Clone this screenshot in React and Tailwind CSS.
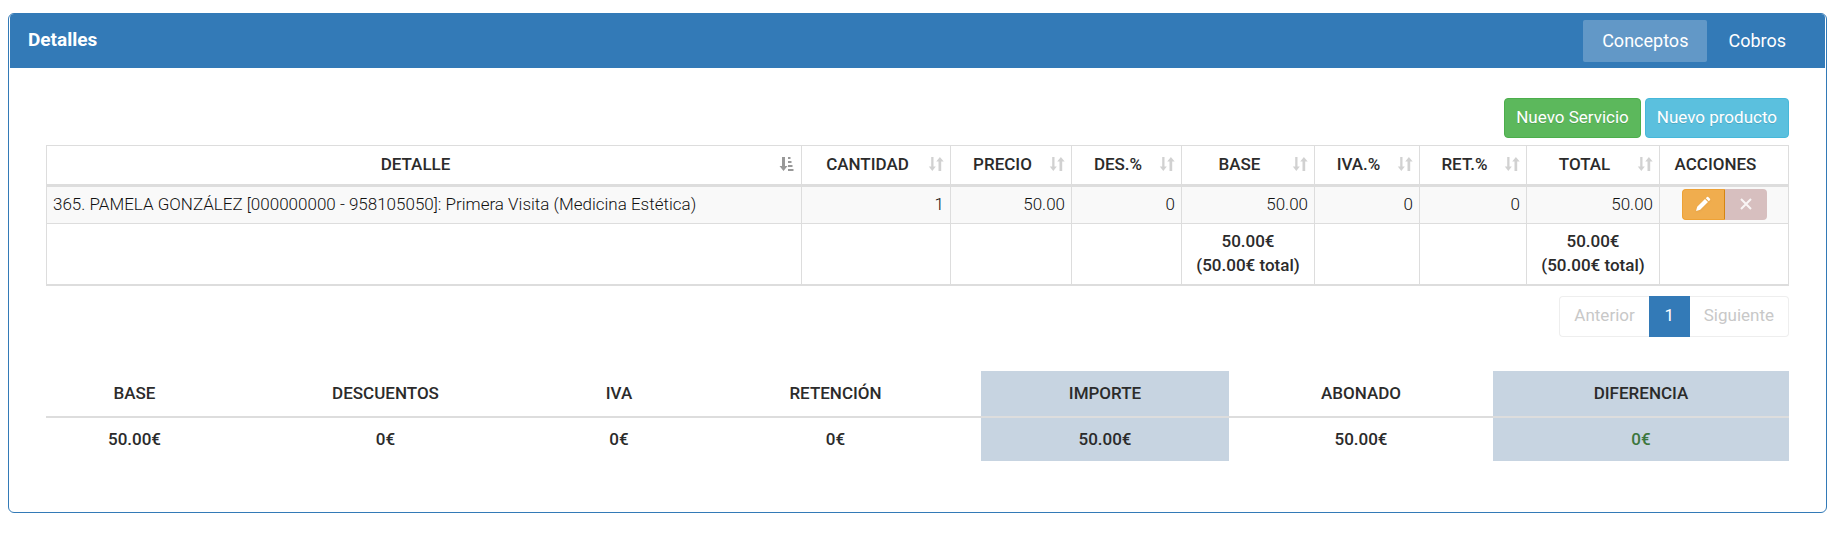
import { clsx } from 'clsx';

const columns = [
  { label: 'DETALLE', sort: 'asc' },
  { label: 'CANTIDAD', sort: 'both', width: 'w-[149px]' },
  { label: 'PRECIO', sort: 'both', width: 'w-[121px]' },
  { label: 'DES.%', sort: 'both', width: 'w-[110px]' },
  { label: 'BASE', sort: 'both', width: 'w-[133px]', total: '50.00€' },
  { label: 'IVA.%', sort: 'both', width: 'w-[105px]' },
  { label: 'RET.%', sort: 'both', width: 'w-[107px]' },
  { label: 'TOTAL', sort: 'both', width: 'w-[133px]', total: '50.00€' },
  { label: 'ACCIONES', width: 'w-[129px]' },
];

const rows = [
  {
    detail: '365. PAMELA GONZÁLEZ [000000000 - 958105050]: Primera Visita (Medicina Estética)',
    values: ['1', '50.00', '0', '50.00', '0', '0', '50.00'],
  },
];

const summary = [
  { label: 'BASE', value: '50.00€', width: 'w-[177px]' },
  { label: 'DESCUENTOS', value: '0€', width: 'w-[325px]' },
  { label: 'IVA', value: '0€', width: 'w-[142px]' },
  { label: 'RETENCIÓN', value: '0€', width: 'w-[291px]' },
  { label: 'IMPORTE', value: '50.00€', width: 'w-[248px]', highlight: true },
  { label: 'ABONADO', value: '50.00€', width: 'w-[264px]' },
  { label: 'DIFERENCIA', value: '0€', width: 'w-[296px]', highlight: true, color: 'text-[#3c763d]' },
];

function SortIcon({ type }) {
  if (type === 'asc') {
    return (
      <svg viewBox="0 0 16 16" className="size-4 text-black/40" fill="currentColor" aria-hidden="true">
        <path d="M3 1h3v9h2.500L4.500 15 .500 10H3zM9 1h2.500v2H9zM9 5h3.500v2H9zM9 9h4.500v2H9zM9 13h5.500v2H9z" />
      </svg>
    );
  }
  return (
    <svg viewBox="0 0 16 16" className="size-4 text-black/18" fill="currentColor" aria-hidden="true">
      <path d="M3.200 1h2.300v9.500h2.300L4.300 15 .800 10.500h2.400zM10.500 15h2.700V5.500h2.500L11.900 1 8.200 5.500h2.300z" />
    </svg>
  );
}

function DetailsTable() {
  return (
    <table className="mt-[7px] w-full table-fixed border-separate border-spacing-0 border-t border-l border-[#ddd]">
      <thead>
        <tr>
          {columns.map((col) => (
            <th key={col.label} className={clsx('relative border-r border-b-3 border-[#ddd] pt-1.5 pr-[23px] pb-2 pl-1.5 font-medium', col.width)}>
              {col.label}
              {col.sort && (
                <span className="absolute right-1.5 bottom-3">
                  <SortIcon type={col.sort} />
                </span>
              )}
            </th>
          ))}
        </tr>
      </thead>
      <tbody>
        {rows.map((row) => (
          <tr key={row.detail} className="bg-[#f9f9f9] font-light text-[#111]">
            <td className="border-r border-b border-[#ddd] px-1.5 pb-0.5">{row.detail}</td>
            {row.values.map((value, i) => (
              <td key={i} className="border-r border-b border-[#ddd] px-1.5 pb-0.5 text-right">{value}</td>
            ))}
            <td className="border-r border-b border-[#ddd] pt-0.5 pb-[3px]">
              <div className="flex justify-center">
                <button type="button" aria-label="Editar" className="flex h-[31px] w-[43px] items-center justify-center rounded-l border border-[#eea236] border-r-[#d58512] bg-[#f0ad4e] pb-0.5 text-white">
                  <svg viewBox="0 0 16 16" className="size-4 drop-shadow-xs" fill="currentColor">
                    <path d="M1 15l1.200-4.200L10 3l3 3-7.800 7.800zM10.800 2.200L12 1q.600-.500 1.200 0L15 2.800q.500.600 0 1.200l-1.200 1.200z" />
                  </svg>
                </button>
                <button type="button" aria-label="Eliminar" disabled className="flex h-[31px] w-[42px] items-center justify-center rounded-r bg-[#d7bfbf] pb-0.5 text-white/85">
                  <svg viewBox="0 0 16 16" className="size-4" fill="none" stroke="currentColor" strokeWidth="2">
                    <path d="M3 3l10 10M13 3l-10 10" />
                  </svg>
                </button>
              </div>
            </td>
          </tr>
        ))}
      </tbody>
      <tfoot>
        <tr>
          {columns.map((col) => (
            <td key={col.label} className="border-r border-b-2 border-[#ddd] pt-[5px] pb-[7px] text-center font-medium">
              {col.total && (
                <>
                  {col.total}
                  <br />({col.total} total)
                </>
              )}
            </td>
          ))}
        </tr>
      </tfoot>
    </table>
  );
}

function Pagination() {
  return (
    <nav className="mt-2.5 flex h-[41px] justify-end" aria-label="Paginación">
      <button type="button" disabled className="rounded-l border border-r-0 border-[#eee] px-3.5 pb-1 text-[#c8c8c8]">Anterior</button>
      <button type="button" className="w-[41px] bg-[#337ab7] pb-1 text-white">1</button>
      <button type="button" disabled className="rounded-r border border-l-0 border-[#eee] px-3.5 pb-1 text-[#c8c8c8]">Siguiente</button>
    </nav>
  );
}

function SummaryTable() {
  return (
    <table className="mt-[34px] w-full table-fixed border-separate border-spacing-0 text-center font-medium">
      <thead>
        <tr>
          {summary.map((item) => (
            <th key={item.label} className={clsx('h-[47px] border-b-2 border-[#ddd] pb-0.5 font-medium', item.width, item.highlight && 'bg-[#c7d4e1]')}>
              {item.label}
            </th>
          ))}
        </tr>
      </thead>
      <tbody>
        <tr>
          {summary.map((item) => (
            <td key={item.label} className={clsx('h-[43px] pb-0.5', item.highlight && 'bg-[#c7d4e1]', item.color)}>
              {item.value}
            </td>
          ))}
        </tr>
      </tbody>
    </table>
  );
}

export default function App() {
  return (
    <div className="pt-[13px] pr-[21px] pl-2 font-[Roboto,sans-serif] text-[17px]/6 text-[#2b2b2b]">
      <section className="rounded-md border border-[#337ab7]">
        <header className="mx-px flex items-start justify-between rounded-t-sm bg-[#337ab7] pr-5 pl-[18px] text-white">
          <h3 className="pt-3.5 text-[19px]/6 font-bold">Detalles</h3>
          <nav className="flex gap-0.5 pt-1.5 pb-1.5">
            <a href="#conceptos" className="rounded-xs bg-white/23 px-[19px] py-[9px] text-lg/6">Conceptos</a>
            <a href="#cobros" className="px-[19px] py-[9px] text-lg/6">Cobros</a>
          </nav>
        </header>
        <div className="px-[37px] pt-[30px] pb-[51px]">
          <div className="flex justify-end gap-1">
            <button type="button" className="h-10 rounded border border-[#4cae4c] bg-[#5cb85c] px-[11px] pb-0.5 text-white text-shadow-2xs">Nuevo Servicio</button>
            <button type="button" className="h-10 rounded border border-[#46b8da] bg-[#5bc0de] px-[11px] pb-0.5 text-white text-shadow-2xs">Nuevo producto</button>
          </div>
          <DetailsTable />
          <Pagination />
          <SummaryTable />
        </div>
      </section>
    </div>
  );
}
